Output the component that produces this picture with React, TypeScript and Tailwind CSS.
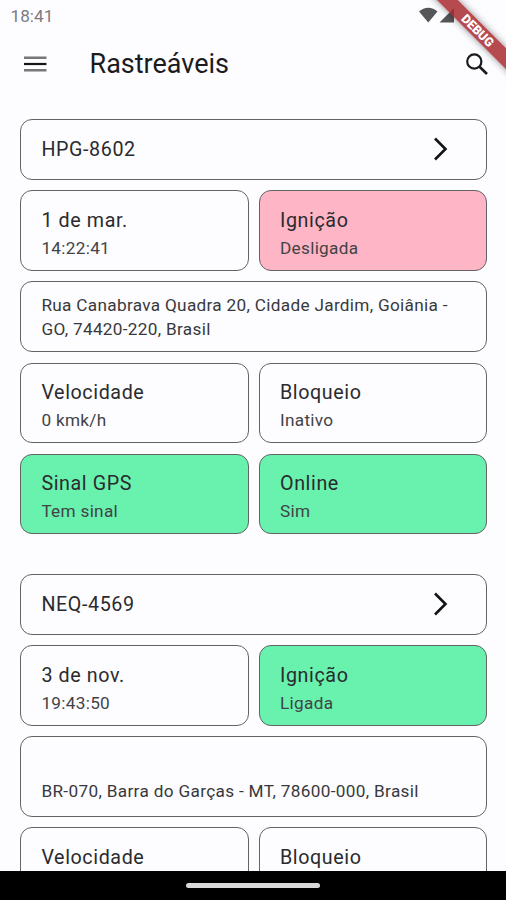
import type { ReactNode } from "react";

type Tone = "plain" | "red" | "green";

const tones: Record<Tone, string> = {
  plain: "bg-[#fdfcff]",
  red: "bg-[#feb5c5]",
  green: "bg-[#69f1ae]",
};

function Card({ tone = "plain", className, children }: { tone?: Tone; className: string; children: ReactNode }) {
  return (
    <div className={`rounded-[12px] border border-[#636366] pl-[20.4px] ${tones[tone]} ${className}`}>{children}</div>
  );
}

function Info({ title, value, tone }: { title: string; value?: string; tone?: Tone }) {
  return (
    <Card tone={tone} className="h-[80.6px] min-w-0 flex-1 pt-[15.5px]">
      <p className="text-[19.7px] leading-[28px] tracking-[0.6px] text-[#2a2b2e]">{title}</p>
      {value && <p className="text-[17.2px] leading-[27px] tracking-[0.3px] text-[#424346]">{value}</p>}
    </Card>
  );
}

function Row({ children }: { children: ReactNode }) {
  return <div className="flex gap-[10px]">{children}</div>;
}

function Plate({ name }: { name: string }) {
  return (
    <Card className="flex h-[61px] items-center justify-between pr-[37px]">
      <span className="pt-[1px] text-[19.7px] leading-[28px] tracking-[0.6px] text-[#2a2b2e]">{name}</span>
      <svg width="16" height="26" viewBox="0 0 16 26" fill="none" stroke="#101418" strokeWidth="2.6">
        <path d="M2 2.5 12.5 13 2 23.5" />
      </svg>
    </Card>
  );
}

export default function App() {
  return (
    <div className="relative flex h-[900px] w-[506px] flex-col overflow-hidden bg-[#fdfcff] font-[Roboto,sans-serif]">
      <div className="flex h-[32px] shrink-0 items-center justify-between pl-[10.5px] pr-[49px]">
        <span className="text-[17.2px] leading-[20px] text-[#7b7b7e]">18:41</span>
        <svg width="38" height="18" viewBox="0 0 38 18" fill="#565658">
          <path d="M0 4.6C5.2-.5 13.3-.5 18.5 4.6L9.25 15.5Z" />
          <path d="M35 1V15.5H20.5Z" />
        </svg>
      </div>

      <header className="flex h-[64px] shrink-0 items-center pl-[24px] pr-[17.5px]">
        <svg width="23" height="18" viewBox="0 0 23 18" fill="none" stroke="#77777a" strokeWidth="2.4">
          <path d="M0 2.8H22.5M0 15.2H22.5" />
          <path d="M0 9H22.5" stroke="#161618" strokeWidth="2.2" />
        </svg>
        <h1 className="ml-[42.5px] text-[27px] leading-[34px] text-[#1b1b1e]">Rastreáveis</h1>
        <svg className="ml-auto" width="24" height="24" viewBox="0 0 24 24" fill="none" stroke="#1b1b1e" strokeWidth="2.2">
          <circle cx="9.3" cy="9.5" r="7.1" />
          <path d="M14.3 14.5 22 22" strokeWidth="2.6" />
        </svg>
      </header>

      <main className="flex min-h-0 flex-1 flex-col gap-[39.8px] overflow-hidden pl-[20px] pr-[18.8px] pt-[22.8px]">
        <section className="flex shrink-0 flex-col gap-[10.4px]">
          <Plate name="HPG-8602" />
          <Row>
            <Info title="1 de mar." value="14:22:41" />
            <Info title="Ignição" value="Desligada" tone="red" />
          </Row>
          <Card className="h-[71px] pt-[10.5px]">
            <p className="text-[17.2px] leading-[24.4px] tracking-[0.31px] text-[#38393c]">
              Rua Canabrava Quadra 20, Cidade Jardim, Goiânia -<br />
              GO, 74420-220, Brasil
            </p>
          </Card>
          <Row>
            <Info title="Velocidade" value="0 kmk/h" />
            <Info title="Bloqueio" value="Inativo" />
          </Row>
          <Row>
            <Info title="Sinal GPS" value="Tem sinal" tone="green" />
            <Info title="Online" value="Sim" tone="green" />
          </Row>
        </section>

        <section className="flex shrink-0 flex-col gap-[10.4px]">
          <Plate name="NEQ-4569" />
          <Row>
            <Info title="3 de nov." value="19:43:50" />
            <Info title="Ignição" value="Ligada" tone="green" />
          </Row>
          <Card className="h-[80.6px] pt-[41.5px]">
            <p className="text-[17.2px] leading-[24.4px] tracking-[0.33px] text-[#38393c]">
              BR-070, Barra do Garças - MT, 78600-000, Brasil
            </p>
          </Card>
          <Row>
            <Info title="Velocidade" />
            <Info title="Bloqueio" />
          </Row>
        </section>
      </main>

      <footer className="flex h-[29px] shrink-0 justify-center bg-black pt-[12px]">
        <div className="h-[5px] w-[134px] rounded-full bg-[#d8d8d8]" />
      </footer>

      <div className="absolute right-[-42px] top-[22.5px] flex h-[14.5px] w-[140px] rotate-45 items-center justify-center bg-[#a82b30]/85 shadow-[0_0_7px_rgba(0,0,0,0.45)]">
        <span className="text-[12.5px] font-black leading-[15px] text-white">DEBUG</span>
      </div>
    </div>
  );
}
